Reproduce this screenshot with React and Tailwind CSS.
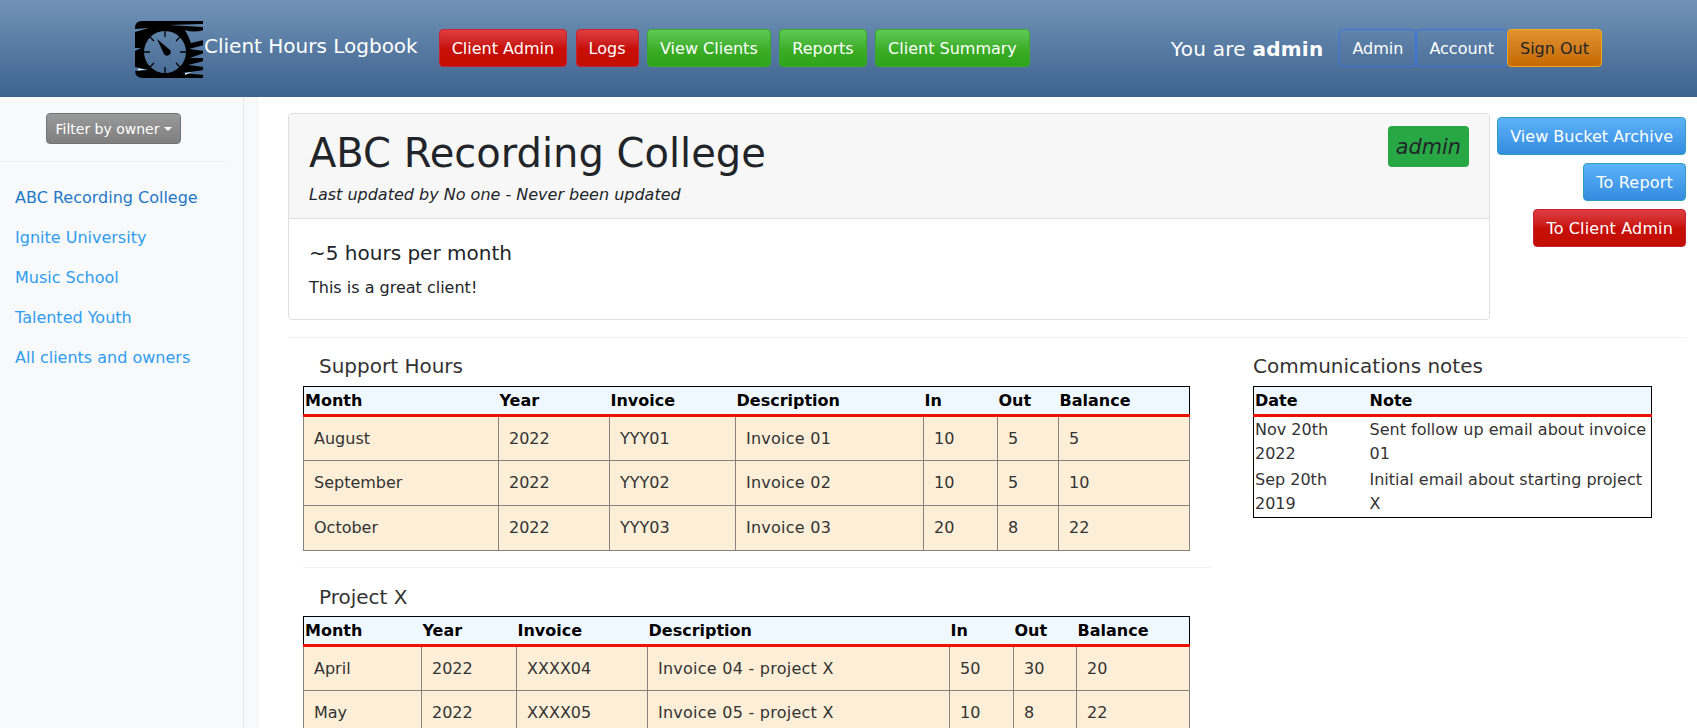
import React from 'react';

const supportRows = [
  ['August', '2022', 'YYY01', 'Invoice 01', '10', '5', '5'],
  ['September', '2022', 'YYY02', 'Invoice 02', '10', '5', '10'],
  ['October', '2022', 'YYY03', 'Invoice 03', '20', '8', '22'],
];

const projectRows = [
  ['April', '2022', 'XXXX04', 'Invoice 04 - project X', '50', '30', '20'],
  ['May', '2022', 'XXXX05', 'Invoice 05 - project X', '10', '8', '22'],
];

const clients = ['Ignite University', 'Music School', 'Talented Youth', 'All clients and owners'];
const headings = ['Month', 'Year', 'Invoice', 'Description', 'In', 'Out', 'Balance'];

const btn = 'inline-block px-3 h-[38px] leading-[38px] text-base rounded border whitespace-nowrap';
const red = 'bg-gradient-to-b from-[#de3d42] via-[#c80f08] via-50% to-[#c20e00] border-[#c82333] text-white';
const green = 'bg-gradient-to-b from-[#5fc955] via-[#38ab22] via-60% to-[#2fa51c] border-[#3aa82c] text-white';
const blue = 'bg-gradient-to-b from-[#5cb2f8] to-[#348ce0] border-[#2f9fc0] text-white';
const navy = 'border-[#3b76e0] text-white';

const Logo = () => (
  <svg width="70" height="60" viewBox="0 0 70 60" className="shrink-0">
    <mask id="logo-holes">
      <rect width="70" height="60" fill="#fff" />
      <circle cx="30" cy="32" r="21" fill="#000" />
      <path d="M34 5 L68 4 V7 Z" fill="#000" />
      <path d="M50 10 Q58 13 69 10 V20 L56 23 Q53 15 50 10 Z" fill="#000" />
      <path d="M54 29 L69 25 V31 Z" fill="#000" />
      <path d="M55 38 L69 33 V38 Z" fill="#000" />
      <path d="M53 45 L69 41 V47 Z" fill="#000" />
      <path d="M47 53 L69 50 V55 Z" fill="#000" />
      <path d="M0 9 L14 8 L0 12 Z M0 47 L14 50 L0 51 Z M0 28 H6 L0 31 Z" fill="#000" />
    </mask>
    <path d="M7 1 H68 V58 H8 Q0 58 0 50 V8 Q0 1 7 1 Z" fill="#000" mask="url(#logo-holes)" />
    <path d="M30 11 V17 M30 47 V53 M9 32 H15 M45 32 H51 M15 17 L19 21 M45 17 L41 21 M15 47 L19 43 M45 47 L41 43" stroke="#000" strokeWidth="1.3" />
    <path d="M22 19 L35 30 A3.5 3.5 0 0 1 29 34 Z" fill="#000" />
    <path d="M3 48.5 L11 49.5 L3 50.5 Z M50 53 L57 52 L50 55 Z" fill="#e4ecf5" />
  </svg>
);

const HoursTable = ({ rows, widths }) => (
  <table className="table-fixed border-collapse w-[886px] text-base text-[#333]">
    <thead>
      <tr className="bg-[#f0f8ff] text-black">
        {headings.map((h, i) => (
          <th
            key={h}
            style={{ width: widths[i] }}
            className={`text-left font-bold px-[1px] h-[29px] border-t border-black border-b-[3px] border-b-[#f01000] ${i === 0 ? 'border-l' : ''} ${i === 6 ? 'border-r' : ''}`}
          >
            {h}
          </th>
        ))}
      </tr>
    </thead>
    <tbody>
      {rows.map((row) => (
        <tr key={row[0]} className="bg-[#fdeed7]">
          {row.map((cell, i) => (
            <td key={i} className={`h-[45px] px-[10px] border border-[#87827d] ${i === 3 ? 'tracking-[0.25px]' : ''}`}>{cell}</td>
          ))}
        </tr>
      ))}
    </tbody>
  </table>
);

const App = () => {
  return (
    <div className="h-screen overflow-hidden bg-white text-[#212529] font-['DejaVu_Sans','Liberation_Sans',sans-serif]">
      <header className="h-[97px] bg-gradient-to-b from-[#7193b8] to-[#3d628d] flex items-start pl-[135px] pr-[95px]">
        <div className="flex items-center mt-[20px]">
          <Logo />
          <a className="text-white text-xl -ml-[1px] -mt-[8px]">Client Hours Logbook</a>
        </div>
        <nav className="flex gap-[8.5px] ml-[21px] mt-[29px]">
          <a className={`${btn} ${red}`}>Client Admin</a>
          <a className={`${btn} ${red}`}>Logs</a>
          <a className={`${btn} ${green}`}>View Clients</a>
          <a className={`${btn} ${green}`}>Reports</a>
          <a className={`${btn} ${green}`}>Client Summary</a>
        </nav>
        <div className="ml-auto flex items-center mt-[29px]">
          <span className="text-white text-xl mr-[16px] pt-[2px] tracking-[0.25px]">You are <b>admin</b></span>
          <a className={`${btn} ${navy}`}>Admin</a>
          <a className={`${btn} ${navy}`}>Account</a>
          <a className={`${btn} bg-gradient-to-b from-[#e0922e] to-[#c46a00] border-[#f0a818] text-[#212529]`}>Sign Out</a>
        </div>
      </header>

      <div className="flex h-[631px]">
        <aside className="w-[258px] shrink-0 bg-[#f8f9fa] flex">
          <div className="w-[244px] border-r border-[#e6e7e8] pt-[16px]">
            <div className="flex justify-center pb-[17px] mr-[16px] border-b border-[#eeeff0]">
              <button className="h-[31px] px-[8px] pt-[1px] rounded text-sm text-white bg-gradient-to-b from-[#9a9a9a] to-[#7f7f7f] border border-[#6c757d] flex items-center">
                Filter by owner
                <span className="ml-[4px] border-x-[4px] border-x-transparent border-t-[4px] border-t-white"></span>
              </button>
            </div>
            <ul className="mt-[16px] pl-[15px] text-base text-[#2f9cf0]">
              <li className="h-[40px] leading-[40px] text-[#1f78c8]">ABC Recording College</li>
              {clients.map((c) => (
                <li key={c} className="h-[40px] leading-[40px]">{c}</li>
              ))}
            </ul>
          </div>
          <div className="flex-1 border-r border-[#eeeff0]"></div>
        </aside>

        <main className="flex-1 pl-[30px] pr-[11px] pt-[16px]">
          <div className="flex items-start pb-[17px] border-b border-[#f1f1f1]">
            <div className="w-[1202px] h-[207px] shrink-0 border border-[#dfdfdf] rounded">
              <div className="h-[105px] bg-[#f7f7f7] border-b border-[#dfdfdf] rounded-t relative px-[20px] pt-[15px]">
                <h1 className="text-[40px] leading-[48px]">ABC Recording College</h1>
                <p className="italic text-base mt-[6px]">Last updated by No one - Never been updated</p>
                <span className="absolute right-[20px] top-[12px] h-[41px] leading-[43px] px-[8px] rounded bg-[#28a745] italic text-[20.8px]">admin</span>
              </div>
              <div className="px-[20px] pt-[22px]">
                <h5 className="text-xl leading-[24px]">~5 hours per month</h5>
                <p className="text-base mt-[11px]">This is a great client!</p>
              </div>
            </div>
            <div className="flex-1 flex flex-col items-end gap-[8px] mt-[4px]">
              <a className={`${btn} ${blue}`}>View Bucket Archive</a>
              <a className={`${btn} ${blue} tracking-[0.2px]`}>To Report</a>
              <a className={`${btn} ${red} tracking-[0.15px]`}>To Client Admin</a>
            </div>
          </div>

          <div className="flex pt-[16px]">
            <div className="w-[923px] pl-[15px]">
              <h5 className="text-xl leading-[24px] ml-[16px] mb-[8px] text-[#333]">Support Hours</h5>
              <HoursTable rows={supportRows} widths={[195, 111, 126, 188, 74, 61, 131]} />
              <div className="border-t border-[#f1f1f1] mt-[16px] mb-[17px]"></div>
              <h5 className="text-xl leading-[24px] ml-[16px] mb-[7px] text-[#333]">Project X</h5>
              <HoursTable rows={projectRows} widths={[118, 95, 131, 302, 64, 63, 113]} />
            </div>
            <div className="ml-[42px] w-[400px]">
              <h5 className="text-xl leading-[24px] mb-[8px] text-[#333]">Communications notes</h5>
              <table className="table-fixed border-collapse w-[399px] text-base text-[#333] border border-black">
                <thead>
                  <tr className="bg-[#f0f8ff] text-black">
                    <th className="w-[115px] text-left font-bold px-[1px] h-[29px] border-b-[3px] border-b-[#f01000]">Date</th>
                    <th className="text-left font-bold px-[1px] h-[29px] border-b-[3px] border-b-[#f01000]">Note</th>
                  </tr>
                </thead>
                <tbody className="leading-[24px]">
                  <tr>
                    <td className="px-[1px] py-px align-top">Nov 20th 2022</td>
                    <td className="px-[1px] py-px align-top">Sent follow up email about invoice 01</td>
                  </tr>
                  <tr>
                    <td className="px-[1px] py-px align-top">Sep 20th 2019</td>
                    <td className="px-[1px] py-px align-top">Initial email about starting project X</td>
                  </tr>
                </tbody>
              </table>
            </div>
          </div>
        </main>
      </div>
    </div>
  );
};

export default App;
